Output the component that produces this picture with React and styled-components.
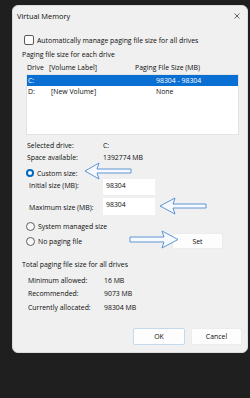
import React from "react";
import styled, { createGlobalStyle } from "styled-components";

const Global = createGlobalStyle`
  html, body { margin: 0; padding: 0; background: #1f1f1f; }
  body { width: 250px; height: 398px; overflow: hidden; font-family: "Open Sans", "Noto Sans", sans-serif; }
  #root { padding: 5px 2px 0 12px; position: relative; }
`;

const Dialog = styled.div`
  position: relative;
  width: 236px;
  height: 348px;
  background: #f0f0f0;
  border-radius: 6px;
  box-sizing: border-box;
  border: 1px solid #dcdcdc;
  color: #0c0c0c;
  font-size: 6.9px;
  display: flex;
  flex-direction: column;
`;

const TitleBar = styled.div`
  height: 20px;
  display: flex;
  align-items: center;
  justify-content: space-between;
  padding: 0 7px 0 4px;
  font-size: 7.4px;
`;

const Row = styled.div`
  height: ${(p) => p.$h}px;
  margin-top: ${(p) => p.$mt || 0}px;
  padding-left: ${(p) => p.$pl || 0}px;
  display: flex;
  align-items: center;
  flex-shrink: 0;
`;

const Label = styled.span`
  width: ${(p) => p.$w}px;
  flex-shrink: 0;
  white-space: nowrap;
  margin-top: ${(p) => p.$dy || 0}px;
`;

const Check = styled.span`
  width: 8px;
  height: 8px;
  border: 1px solid #5a5a5a;
  border-radius: 2px;
  background: #fbfbfb;
  margin-right: 3px;
`;

const Radio = styled.span`
  width: ${(p) => (p.$on ? 8 : 7)}px;
  height: ${(p) => (p.$on ? 8 : 7)}px;
  border-radius: 50%;
  box-sizing: content-box;
  border: ${(p) => (p.$on ? "none" : "1px solid #5f5f5f")};
  background: ${(p) => (p.$on ? "#0067c0" : "#f7f7f7")};
  display: flex;
  align-items: center;
  justify-content: center;
  margin-right: 3px;
  &::after {
    content: "";
    display: ${(p) => (p.$on ? "block" : "none")};
    width: 4px;
    height: 4px;
    border-radius: 50%;
    background: #fff;
  }
`;

const ListBox = styled.div`
  margin: 1px 8px 0 13px;
  height: 61px;
  background: #ffffff;
  border: 1px solid #e2e2e2;
  box-sizing: border-box;
  flex-shrink: 0;
`;

const ListRow = styled.div`
  height: 11px;
  display: grid;
  grid-template-columns: 23px 105px 1fr;
  align-items: center;
  padding-left: 1px;
  background: ${(p) => (p.$sel ? "#0a6fd3" : "transparent")};
  color: ${(p) => (p.$sel ? "#ffffff" : "#0c0c0c")};
`;

const HeaderGrid = styled.div`
  height: 12px;
  margin-top: 1px;
  display: grid;
  grid-template-columns: 22px 86px 1fr;
  align-items: center;
  padding-left: 14px;
  flex-shrink: 0;
`;

const Input = styled.div`
  width: 52px;
  height: ${(p) => p.$h}px;
  background: #ffffff;
  box-sizing: border-box;
  padding: 2px 3px 0;
  display: flex;
  align-items: flex-start;
`;

const Button = styled.div`
  width: ${(p) => p.$w}px;
  height: ${(p) => p.$h}px;
  box-sizing: border-box;
  background: #fdfdfd;
  border: 1px solid ${(p) => (p.$def ? "#c5d9ea" : "#ececec")};
  border-radius: 2px;
  display: flex;
  align-items: center;
  justify-content: center;
`;

const ButtonBar = styled.div`
  display: flex;
  justify-content: flex-end;
  gap: 6px;
  padding-right: 5px;
  margin-top: 14px;
  flex-shrink: 0;
`;

const Arrow = styled.svg`
  position: absolute;
  left: ${(p) => p.$x}px;
  top: ${(p) => p.$y}px;
  overflow: visible;
  pointer-events: none;
`;

function LeftArrow({ x, y, len, head, hh, sh }) {
  const d = `M0 ${hh} L${head} 0 L${head - 2} ${hh - sh} L${len} ${hh - sh} L${len} ${hh + sh} L${head - 2} ${hh + sh} L${head} ${hh * 2} Z`;
  return (
    <Arrow $x={x} $y={y} width={len} height={hh * 2}>
      <path d={d} fill="#f6f9fd" stroke="#4f8ad0" strokeWidth="0.9" strokeLinejoin="round" />
    </Arrow>
  );
}

function RightArrow({ x, y, len, head, hh, sh }) {
  const d = `M${len} ${hh} L${len - head} 0 L${len - head + 2} ${hh - sh} L0 ${hh - sh} L0 ${hh + sh} L${len - head + 2} ${hh + sh} L${len - head} ${hh * 2} Z`;
  return (
    <Arrow $x={x} $y={y} width={len} height={hh * 2}>
      <path d={d} fill="#f6f9fd" stroke="#4f8ad0" strokeWidth="0.9" strokeLinejoin="round" />
    </Arrow>
  );
}

export default function App() {
  return (
    <>
      <Global />
      <Dialog>
        <TitleBar>
          <span>Virtual Memory</span>
          <svg width="6" height="6" viewBox="0 0 6 6">
            <path d="M0.5 0.5 L5.5 5.5 M5.5 0.5 L0.5 5.5" stroke="#444" strokeWidth="0.8" />
          </svg>
        </TitleBar>
        <Row $h={12} $mt={8} $pl={11}>
          <Check />
          <span>Automatically manage paging file size for all drives</span>
        </Row>
        <Row $h={12} $mt={2} $pl={9}>
          <span>Paging file size for each drive</span>
        </Row>
        <HeaderGrid>
          <span>Drive</span>
          <span>[Volume Label]</span>
          <span>Paging File Size (MB)</span>
        </HeaderGrid>
        <ListBox>
          <ListRow $sel>
            <span>C:</span>
            <span></span>
            <span>98304 - 98304</span>
          </ListRow>
          <ListRow>
            <span>D:</span>
            <span>[New Volume]</span>
            <span>None</span>
          </ListRow>
        </ListBox>
        <Row $h={11} $mt={5} $pl={14}>
          <Label $w={76}>Selected drive:</Label>
          <span>C:</span>
        </Row>
        <Row $h={12} $pl={14}>
          <Label $w={76}>Space available:</Label>
          <span>1392774 MB</span>
        </Row>
        <Row $h={12} $mt={4} $pl={13}>
          <Radio $on />
          <span>Custom size:</span>
        </Row>
        <Row $h={16} $pl={16}>
          <Label $w={74} $dy={-3}>Initial size (MB):</Label>
          <Input $h={16}>98304</Input>
        </Row>
        <Row $h={17} $mt={3} $pl={16}>
          <Label $w={74} $dy={2}>Maximum size (MB):</Label>
          <Input $h={17}>98304</Input>
        </Row>
        <Row $h={12} $mt={5} $pl={13}>
          <Radio />
          <span>System managed size</span>
        </Row>
        <Row $h={16} $mt={1} $pl={13}>
          <Radio />
          <Label $w={134}>No paging file</Label>
          <Button $w={51} $h={16}>Set</Button>
        </Row>
        <Row $h={12} $mt={9} $pl={9}>
          <span>Total paging file size for all drives</span>
        </Row>
        <Row $h={12} $mt={4} $pl={15}>
          <Label $w={76}>Minimum allowed:</Label>
          <span>16 MB</span>
        </Row>
        <Row $h={12} $mt={1.5} $pl={15}>
          <Label $w={76}>Recommended:</Label>
          <span>9073 MB</span>
        </Row>
        <Row $h={12} $mt={2} $pl={15}>
          <Label $w={76}>Currently allocated:</Label>
          <span>98304 MB</span>
        </Row>
        <ButtonBar>
          <Button $w={52} $h={17} $def>OK</Button>
          <Button $w={51} $h={17}>Cancel</Button>
        </ButtonBar>
      </Dialog>
      <LeftArrow x={85} y={163} len={46} head={14} hh={8} sh={2} />
      <LeftArrow x={160} y={198} len={46} head={15} hh={8} sh={2} />
      <RightArrow x={130} y={231} len={48} head={16} hh={8.5} sh={2.5} />
    </>
  );
}
